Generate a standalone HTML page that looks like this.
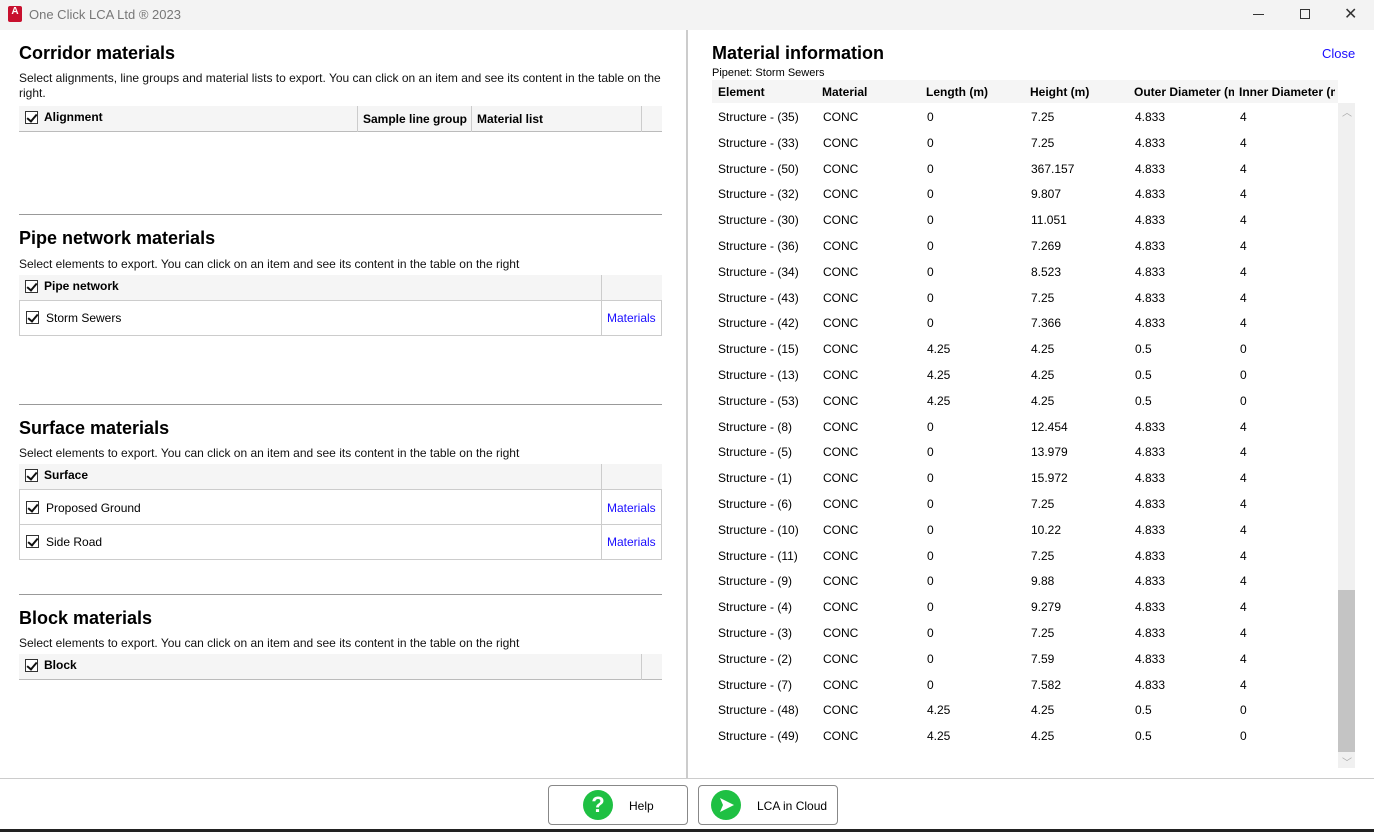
<!DOCTYPE html>
<html><head><meta charset="utf-8"><style>
*{margin:0;padding:0;box-sizing:border-box}
body{width:1374px;height:832px;position:relative;background:#fff;font-family:"Liberation Sans",sans-serif;color:#000;overflow:hidden}
.a{position:absolute}
.h{font-size:18px;font-weight:bold;left:19px}
.d{font-size:12px;left:19px;color:#111}
.cb{position:absolute;width:13px;height:13px;border:1px solid #333;background:#fff}
.cb:after{content:"";position:absolute;left:3px;top:0px;width:4px;height:8px;border:solid #111;border-width:0 2px 2px 0;transform:rotate(40deg)}
.tb{position:absolute;left:19px;width:643px;border-bottom:1px solid #ccc}
.hd{background:#f5f5f5}
.link{color:#1a0dff;font-size:12px}
.r{position:absolute;font-size:12px}
.hr{position:absolute;left:19px;width:643px;height:1px;background:#999}
</style></head><body>
<div class="a" style="left:0;top:0;width:1374px;height:30px;background:#f3f3f3"></div>
<div class="a" style="left:8px;top:6px;width:14px;height:16px;background:#c8102e;border-radius:2px;color:#fff;font-size:10px;font-weight:bold;text-align:center;line-height:12px">A</div>
<div class="a" style="left:29px;top:7px;font-size:13px;color:#777">One Click LCA Ltd ® 2023</div>
<div class="a" style="left:1253px;top:14px;width:11px;height:1px;background:#333"></div>
<div class="a" style="left:1300px;top:9px;width:10px;height:10px;border:1px solid #333"></div>
<div class="a" style="left:1344px;top:4px;font-size:16px;color:#333">✕</div>

<div class="a h" style="top:43px">Corridor materials</div>
<div class="a d" style="top:71px;width:650px;line-height:15px">Select alignments, line groups and material lists to export. You can click on an item and see its content in the table on the right.</div>
<div class="tb hd" style="top:106px;height:26px;border-bottom:1px solid #bbb"></div>
<div class="cb" style="left:25px;top:111px"></div>
<div class="a" style="left:44px;top:110px;font-size:12px;font-weight:bold">Alignment</div>
<div class="a" style="left:357px;top:106px;width:1px;height:26px;background:#ccc"></div>
<div class="a" style="left:363px;top:112px;font-size:12px;font-weight:bold">Sample line group</div>
<div class="a" style="left:471px;top:106px;width:1px;height:26px;background:#ccc"></div>
<div class="a" style="left:477px;top:112px;font-size:12px;font-weight:bold">Material list</div>
<div class="a" style="left:641px;top:106px;width:1px;height:26px;background:#ccc"></div>
<div class="hr" style="top:214px"></div>

<div class="a h" style="top:228px">Pipe network materials</div>
<div class="a d" style="top:257px">Select elements to export. You can click on an item and see its content in the table on the right</div>
<div class="tb hd" style="top:275px;height:26px"></div>
<div class="a" style="left:601px;top:275px;width:1px;height:26px;background:#ccc"></div>
<div class="cb" style="left:25px;top:280px"></div>
<div class="a" style="left:44px;top:279px;font-size:12px;font-weight:bold">Pipe network</div>
<div class="tb" style="top:301px;height:35px;border:1px solid #ccc;border-top:none"></div>
<div class="a" style="left:601px;top:301px;width:1px;height:35px;background:#ccc"></div>
<div class="cb" style="left:26px;top:311px"></div>
<div class="a" style="left:46px;top:311px;font-size:12px">Storm Sewers</div>
<div class="a link" style="left:607px;top:311px">Materials</div>
<div class="hr" style="top:404px"></div>

<div class="a h" style="top:418px">Surface materials</div>
<div class="a d" style="top:446px">Select elements to export. You can click on an item and see its content in the table on the right</div>
<div class="tb hd" style="top:464px;height:26px"></div>
<div class="a" style="left:601px;top:464px;width:1px;height:26px;background:#ccc"></div>
<div class="cb" style="left:25px;top:469px"></div>
<div class="a" style="left:44px;top:468px;font-size:12px;font-weight:bold">Surface</div>
<div class="tb" style="top:490px;height:35px;border:1px solid #ccc;border-top:none"></div>
<div class="a" style="left:601px;top:490px;width:1px;height:70px;background:#ccc"></div>
<div class="cb" style="left:26px;top:501px"></div>
<div class="a" style="left:46px;top:501px;font-size:12px">Proposed Ground</div>
<div class="a link" style="left:607px;top:501px">Materials</div>
<div class="tb" style="top:525px;height:35px;border:1px solid #ccc;border-top:none"></div>
<div class="cb" style="left:26px;top:535px"></div>
<div class="a" style="left:46px;top:535px;font-size:12px">Side Road</div>
<div class="a link" style="left:607px;top:535px">Materials</div>
<div class="hr" style="top:594px"></div>

<div class="a h" style="top:608px">Block materials</div>
<div class="a d" style="top:636px">Select elements to export. You can click on an item and see its content in the table on the right</div>
<div class="tb hd" style="top:654px;height:26px;border-bottom:1px solid #bbb"></div>
<div class="a" style="left:641px;top:654px;width:1px;height:26px;background:#ccc"></div>
<div class="cb" style="left:25px;top:659px"></div>
<div class="a" style="left:44px;top:658px;font-size:12px;font-weight:bold">Block</div>

<div class="a" style="left:686px;top:30px;width:2px;height:748px;background:#ccc"></div>

<div class="a" style="left:712px;top:43px;font-size:18px;font-weight:bold">Material information</div>
<div class="a link" style="left:1322px;top:46px;font-size:13px">Close</div>
<div class="a" style="left:712px;top:67px;font-size:11px">Pipenet: Storm Sewers</div>
<div class="a" style="left:712px;top:80px;width:626px;height:23px;background:#f5f5f5;overflow:hidden;font-size:12px;font-weight:bold;white-space:nowrap">
<span class="a" style="left:6px;top:5px">Element</span><span class="a" style="left:110px;top:5px">Material</span><span class="a" style="left:214px;top:5px">Length (m)</span><span class="a" style="left:318px;top:5px">Height (m)</span><span class="a" style="left:422px;top:5px;width:100px;overflow:hidden">Outer Diameter (m</span><span class="a" style="left:527px;top:5px;width:96px;overflow:hidden">Inner Diameter (m</span></div>
<div class="a" style="left:1338px;top:103px;width:17px;height:665px;background:#f0f0f0"></div>
<div class="a" style="left:1338px;top:590px;width:17px;height:162px;background:#c4c4c4"></div>
<div class="a" style="left:1342px;top:104px;font-size:10px;color:#aaa">︿</div>
<div class="a" style="left:1342px;top:754px;font-size:10px;color:#aaa">﹀</div>
<div id="rows"></div>
<script>
var d=[[35,0,"7.25","4.833",4],[33,0,"7.25","4.833",4],[50,0,"367.157","4.833",4],[32,0,"9.807","4.833",4],[30,0,"11.051","4.833",4],[36,0,"7.269","4.833",4],[34,0,"8.523","4.833",4],[43,0,"7.25","4.833",4],[42,0,"7.366","4.833",4],[15,"4.25","4.25","0.5",0],[13,"4.25","4.25","0.5",0],[53,"4.25","4.25","0.5",0],[8,0,"12.454","4.833",4],[5,0,"13.979","4.833",4],[1,0,"15.972","4.833",4],[6,0,"7.25","4.833",4],[10,0,"10.22","4.833",4],[11,0,"7.25","4.833",4],[9,0,"9.88","4.833",4],[4,0,"9.279","4.833",4],[3,0,"7.25","4.833",4],[2,0,"7.59","4.833",4],[7,0,"7.582","4.833",4],[48,"4.25","4.25","0.5",0],[49,"4.25","4.25","0.5",0]];
var h="";d.forEach(function(r,i){var y=110+i*25.8;var c=["Structure - ("+r[0]+")","CONC",r[1],r[2],r[3],r[4]];var xs=[718,823,927,1031,1135,1240];c.forEach(function(t,j){h+='<div class="r" style="left:'+xs[j]+'px;top:'+y+'px">'+t+'</div>'})});document.getElementById("rows").innerHTML=h;
</script>

<div class="a" style="left:0;top:778px;width:1374px;height:1px;background:#ccc"></div>
<div class="a" style="left:548px;top:785px;width:140px;height:40px;border:1px solid #888;border-radius:4px;background:#fff"></div>
<div class="a" style="left:583px;top:790px;width:30px;height:30px;border-radius:50%;background:#1fc043;color:#fff;font-weight:bold;font-size:22px;text-align:center;line-height:30px">?</div>
<div class="a" style="left:629px;top:799px;font-size:12px">Help</div>
<div class="a" style="left:698px;top:785px;width:140px;height:40px;border:1px solid #888;border-radius:4px;background:#fff"></div>
<div class="a" style="left:711px;top:790px;width:30px;height:30px;border-radius:50%;background:#1fc043"></div>
<svg class="a" style="left:711px;top:790px" width="30" height="30"><path d="M9 8 L23 15 L9 22 L12 15 Z" fill="#fff"/></svg>
<div class="a" style="left:757px;top:799px;font-size:12px">LCA in Cloud</div>
<div class="a" style="left:0;top:829px;width:1374px;height:3px;background:#222"></div>
</body></html>
